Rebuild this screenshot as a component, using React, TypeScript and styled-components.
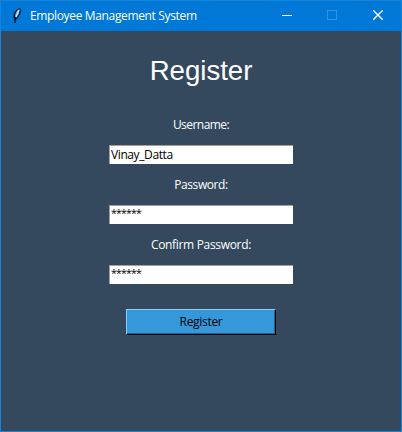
import React from "react";
import styled, { createGlobalStyle } from "styled-components";

const GlobalStyle = createGlobalStyle`
  * { box-sizing: border-box; }
  body { margin: 0; overflow: hidden; }
`;

const Window = styled.div`
  width: 402px;
  height: 432px;
  display: flex;
  flex-direction: column;
  background: #34495e;
  border: 1px solid #1883d7;
  font: 12px/16px "Open Sans", "Noto Sans", sans-serif;
`;

const TitleBar = styled.header`
  flex: none;
  height: 30px;
  display: flex;
  align-items: center;
  background: #0078d7;
  color: #fff;
`;

const Feather = styled.svg`
  width: 12px;
  height: 18px;
  margin: 0 7px 2px 10px;
`;

const Title = styled.span<{ $spacing: number }>`
  flex: 1;
  white-space: nowrap;
  letter-spacing: ${(p) => p.$spacing}px;
`;

const Controls = styled.div`
  display: flex;
`;

const Control = styled.button<{ $faded?: boolean; $nudge?: number }>`
  width: 46px;
  height: 30px;
  padding: 0 0 2px ${(p) => p.$nudge ?? 0}px;
  border: 0;
  display: flex;
  align-items: center;
  justify-content: center;
  background: transparent;
  color: ${(p) => (p.$faded ? "#3393df" : "#fff")};
`;

const Form = styled.main`
  display: flex;
  flex-direction: column;
  align-items: center;
`;

const Heading = styled.h1`
  margin: 23px 0 29px 0;
  font: 27.6px/34px "Liberation Sans", Arial, sans-serif;
  color: #fff;
`;

const Field = styled.label`
  display: flex;
  flex-direction: column;
  align-items: center;
  height: 60px;
`;

const Caption = styled.span<{ $spacing: number }>`
  height: 16px;
  margin-bottom: 12px;
  color: #fff;
  letter-spacing: ${(p) => p.$spacing}px;
`;

const Entry = styled.input<{ $masked?: boolean }>`
  width: 184px;
  height: 19px;
  padding: ${(p) => (p.$masked ? "0 1px 4px" : "0 1px 2px")};
  border: 0 solid #a0a0a0;
  border-width: 1px 0 0 1px;
  border-radius: 0;
  outline: 0;
  background: #fff;
  color: #000;
  font: inherit;
  font-size: ${(p) => (p.$masked ? "10.5px" : "12px")};
  line-height: 14px;
  letter-spacing: ${(p) => (p.$masked ? "-0.8px" : "-0.4px")};
`;

const Submit = styled.button`
  width: 150px;
  height: 26px;
  margin-top: 12px;
  padding: 0;
  border: 1px solid #000;
  border-color: #8fcbf5 #000 #000 #8fcbf5;
  border-radius: 0;
  box-shadow: inset -1px -1px #20618f;
  background: #3498db;
  color: #000;
  font: inherit;
  letter-spacing: -0.3px;
`;

const fields = [
  { name: "Username:", value: "Vinay_Datta", masked: false, spacing: -0.55 },
  { name: "Password:", value: "******", masked: true, spacing: -0.4 },
  { name: "Confirm Password:", value: "******", masked: true, spacing: -0.32 },
];

export default function App() {
  return (
    <>
      <GlobalStyle />
      <Window>
        <TitleBar>
          <Feather viewBox="0 0 12 18">
            <path d="M3 13C1 8 5 3 9 2C11 5 9 10 5 14Z" fill="#081b31" />
            <path d="M4 11C4 7 6 4 8.5 3C9 6 7 10 5 12Z" fill="#75b2f1" />
            <path d="M8 4L5 11" stroke="#dfeeff" strokeWidth="1" />
            <path d="M5 11L4 13V17" stroke="#030b16" strokeWidth="1.2" fill="none" />
          </Feather>
          <Title $spacing={-0.35}>Employee Management System</Title>
          <Controls>
            <Control $nudge={2} aria-label="Minimize">
              <svg width="10" height="10" shapeRendering="crispEdges">
                <path d="M0 5.5H10" stroke="currentColor" />
              </svg>
            </Control>
            <Control $faded aria-label="Maximize">
              <svg width="10" height="10" shapeRendering="crispEdges">
                <path d="M.5 .5H9.5V9.5H.5Z" stroke="currentColor" fill="none" />
              </svg>
            </Control>
            <Control aria-label="Close">
              <svg width="10" height="10">
                <path d="M.3 .3L9.7 9.7M9.7 .3L.3 9.7" stroke="currentColor" strokeWidth="1.4" />
              </svg>
            </Control>
          </Controls>
        </TitleBar>
        <Form>
          <Heading>Register</Heading>
          {fields.map((f) => (
            <Field key={f.name}>
              <Caption $spacing={f.spacing}>{f.name}</Caption>
              <Entry readOnly $masked={f.masked} value={f.value} />
            </Field>
          ))}
          <Submit>Register</Submit>
        </Form>
      </Window>
    </>
  );
}
